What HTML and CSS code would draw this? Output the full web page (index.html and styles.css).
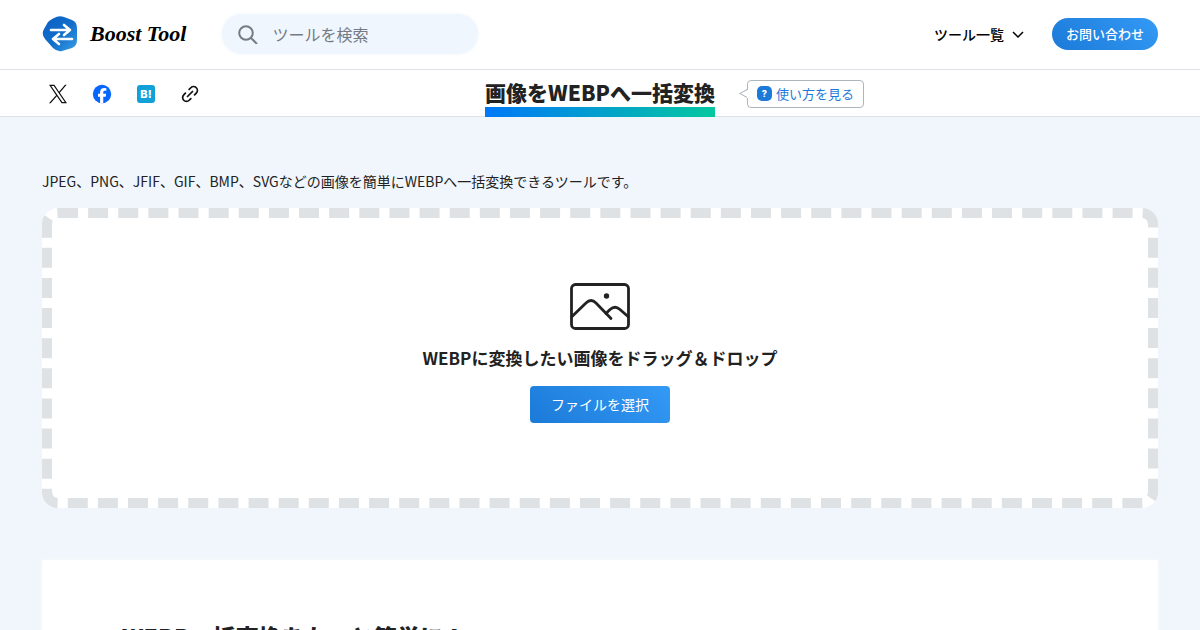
FILE: index.html
```
<!DOCTYPE html>
<html lang="ja">

<head>
  <meta charset="UTF-8" />
  <meta name="viewport" content="width=device-width, initial-scale=1.0" />
  <title>画像をWEBPへ一括変換 | Boost Tool</title>
  <link rel="stylesheet" href="styles.css">
</head>

<body>
  <header class="header">
    <a class="logo" href="#">
      <svg class="logo-mark" viewBox="0 0 36 36" aria-hidden="true">
        <defs>
          <linearGradient id="mark" x1="0" y1="0" x2="1" y2="1">
            <stop offset="0" stop-color="#0a5fc4" />
            <stop offset=".55" stop-color="#146fcb" />
            <stop offset="1" stop-color="#39a0e6" />
          </linearGradient>
        </defs>
        <path fill="url(#mark)" d="M12 2Q17-1 22 1L30 4Q35 6 35 12V24Q35 30 30 32L20 35Q15 36 11 32L3 23Q-1 18 2 13L6 6Q8 4 12 2Z" />
        <g fill="none" stroke="#fff" stroke-width="2.6" stroke-linecap="round" stroke-linejoin="round">
          <path d="M9 14H28M22 9L28 14L22 19" />
          <path d="M30 23H11M17 18L11 23L17 28" />
        </g>
      </svg>
      <span class="logo-text">Boost Tool</span>
    </a>
    <form class="search">
      <svg class="search-icon" viewBox="0 0 20 20" aria-hidden="true">
        <circle cx="8" cy="9" r="6.8" />
        <path d="M13 14L19 20" />
      </svg>
      <input class="search-input" type="search" placeholder="ツールを検索" aria-label="ツールを検索">
    </form>
    <nav class="nav">
      <button class="menu" type="button">
        ツール一覧
        <svg class="chevron" viewBox="0 0 12 8" aria-hidden="true">
          <path d="M1 2L6 7L11 2" />
        </svg>
      </button>
      <a class="contact" href="#">お問い合わせ</a>
    </nav>
  </header>

  <div class="title-bar">
    <div class="share">
      <a href="#" aria-label="X">
        <svg viewBox="0 0 24 24" width="20" height="20">
          <path fill="#111" d="M14.2 10.5L22.4 1H20.4L13.3 9.2L7.7 1H1.2L9.7 13.4L1.2 23H3.2L10.6 14.6L16.3 23H22.8ZM3.9 2.5H6.9L20.1 21.6H17.1Z" />
        </svg>
      </a>
      <a href="#" aria-label="Facebook">
        <svg viewBox="0 0 24 24" width="20" height="20">
          <circle cx="12" cy="12" r="11" fill="#0866ff" />
          <path fill="#fff" d="M9.7 23V15.3H7.2V11.7H9.7V10C9.7 6.4 11.5 4.8 14.8 4.8L17.2 5V8.2H15.5C14 8.2 13.5 8.9 13.5 10.3V11.7H17L16.4 15.3H13.5V23Z" />
        </svg>
      </a>
      <a class="hatena" href="#" aria-label="はてなブックマーク">B!</a>
      <a href="#" aria-label="リンクをコピー">
        <svg viewBox="0 0 24 24" width="20" height="20" fill="none" stroke="#111" stroke-width="2.1" stroke-linecap="round">
          <path d="M9 15L15 9" />
          <path d="M11 6.5L13 4.5A4.5 4.5 0 0 1 19.500 11L17.5 13" />
          <path d="M6.5 11L4.5 13A4.5 4.5 0 0 0 11 19.5L13 17.5" />
        </svg>
      </a>
    </div>
    <h1 class="title">画像をWEBPへ一括変換</h1>
    <a class="howto" href="#">
      <span class="howto-icon">?</span>
      使い方を見る
    </a>
  </div>

  <main class="main">
    <p class="lead">JPEG、PNG、JFIF、GIF、BMP、SVGなどの画像を簡単にWEBPへ一括変換できるツールです。</p>
    <section class="dropzone">
      <svg class="picture" viewBox="0 0 60 48" aria-hidden="true">
        <g fill="none" stroke="#222" stroke-width="2.8" stroke-linecap="round" stroke-linejoin="round">
          <rect x="1.5" y="2.500" width="57" height="44" rx="4" />
          <path d="M2 34.500L16 21Q21 16 26 21L41 36.500" />
          <path d="M36 31.500L40 27.500Q45 23 50 27.500L58 34.500" />
        </g>
        <circle cx="36.500" cy="14" r="2.700" fill="#222" />
      </svg>
      <p class="drop-text">WEBPに変換したい画像をドラッグ＆ドロップ</p>
      <button class="select-file" type="button">ファイルを選択</button>
    </section>
    <section class="article">
      <h2>WEBP一括変換をもっと簡単に！</h2>
    </section>
  </main>
</body>

</html>
```
FILE: styles.css
```
* {
  box-sizing: border-box;
}

body {
  margin: 0;
  font-family: "Noto Sans CJK JP", sans-serif;
  color: #222;
  background-color: #f0f6fc;
}

a {
  color: inherit;
  text-decoration: none;
}

button,
input {
  font-family: inherit;
  border: none;
}

.header {
  display: flex;
  align-items: center;
  height: 70px;
  padding: 0 42px 2px;
  background-color: #fff;
  border-bottom: 1px solid #dee2e6;
}

.logo {
  display: flex;
  align-items: center;
  gap: 12px;
  color: #000;
}

.logo-mark {
  width: 36px;
  height: 36px;
}

.logo-text {
  font-family: "Liberation Serif", serif;
  font-size: 22px;
  font-style: italic;
  font-weight: bold;
  line-height: 32px;
  white-space: nowrap;
}

.search {
  display: flex;
  align-items: center;
  gap: 14px;
  width: 256px;
  height: 40px;
  margin-left: 36px;
  padding: 0 16px;
  background-color: #f0f6fe;
  border-radius: 20px;
  box-shadow: 0 0 4px #f0f6fe;
}

.search-icon {
  flex: none;
  width: 20px;
  height: 20px;
  fill: none;
  stroke: #757b85;
  stroke-width: 2;
}

.search-input {
  width: 100%;
  padding: 0;
  font-size: 16px;
  background: none;
}

.search-input::placeholder {
  color: #757b85;
}

.nav {
  display: flex;
  align-items: center;
  gap: 28px;
  margin-left: auto;
}

.menu {
  display: flex;
  align-items: center;
  gap: 8px;
  padding: 0;
  font-size: 14px;
  font-weight: 500;
  color: #000;
  background: none;
}

.chevron {
  width: 12px;
  height: 8px;
  fill: none;
  stroke: #000;
  stroke-width: 1.5;
}

.contact {
  padding: 0 14px;
  font-size: 13px;
  font-weight: 500;
  line-height: 32px;
  color: #fff;
  background-image: linear-gradient(45deg, #1c7ad8, #339af5);
  border-radius: 16px;
}

.title-bar {
  display: grid;
  grid-template-columns: 1fr auto 1fr;
  align-items: center;
  height: 47px;
  padding: 0 42px;
  background-color: #fff;
  box-shadow: inset 0 -1px #dee2e6;
}

.share {
  display: flex;
  gap: 24px;
  padding-left: 6px;
}

.share a {
  width: 20px;
  height: 20px;
}

.share svg {
  display: block;
}

.share .hatena {
  width: 18px;
  height: 18px;
  margin: 1px;
  font-family: Inter, sans-serif;
  font-size: 11px;
  font-weight: 800;
  line-height: 18px;
  text-align: center;
  color: #fff;
  background-color: #12a0d9;
  border-radius: 3px;
}

.title {
  align-self: end;
  margin: 0;
  font-size: 21px;
  font-weight: 900;
  line-height: 30px;
  border-bottom: 10px solid;
  border-image: linear-gradient(90deg, #0078f8, #06c8a0) 1;
}

.howto {
  position: relative;
  display: flex;
  align-items: center;
  justify-self: start;
  gap: 4px;
  margin-left: 32px;
  padding: 0 9px;
  font-size: 13px;
  line-height: 26px;
  color: #1c7ad8;
  background-color: #fff;
  border: 1px solid #adb5bd;
  border-radius: 4px;
}

/* speech bubble tail */
.howto::before {
  content: "";
  position: absolute;
  top: 8px;
  left: -9px;
  width: 9px;
  height: 10px;
  background-color: #adb5bd;
  clip-path: polygon(0 50%, 100% 0, 100% 12%, 20% 50%, 100% 88%, 100% 100%);
}

.howto::after {
  content: "";
  position: absolute;
  top: 9px;
  left: -1px;
  width: 1px;
  height: 8px;
  background-color: #fff;
}

.howto-icon {
  width: 15px;
  height: 15px;
  font-family: Inter, sans-serif;
  font-size: 9px;
  font-weight: 800;
  line-height: 15px;
  text-align: center;
  color: #fff;
  background-color: #1c7ad8;
  border-radius: 5px;
}

.main {
  padding: 52px 42px 0;
}

.lead {
  margin: 0 0 14px;
  font-size: 14px;
  line-height: 25px;
}

.dropzone {
  display: flex;
  flex-direction: column;
  align-items: center;
  justify-content: center;
  min-height: 300px;
  padding-bottom: 12px;
  background-color: #fff;
  border: 10px dashed #dee2e4;
  border-radius: 16px;
}

.picture {
  width: 60px;
  height: 48px;
}

.drop-text {
  margin: 12px 0;
  font-size: 17px;
  font-weight: bold;
  line-height: 32px;
}

.select-file {
  padding: 0 21px;
  font-size: 14px;
  line-height: 37px;
  color: #fff;
  background-image: linear-gradient(45deg, #1c7ad8, #339af5);
  border-radius: 4px;
}

.article {
  margin-top: 52px;
  padding: 60px 80px;
  background-color: #fff;
  box-shadow: 0 0 4px #f8f9fa;
}

.article h2 {
  margin: 0;
  font-size: 23px;
  font-weight: 900;
  line-height: 32px;
}
```
